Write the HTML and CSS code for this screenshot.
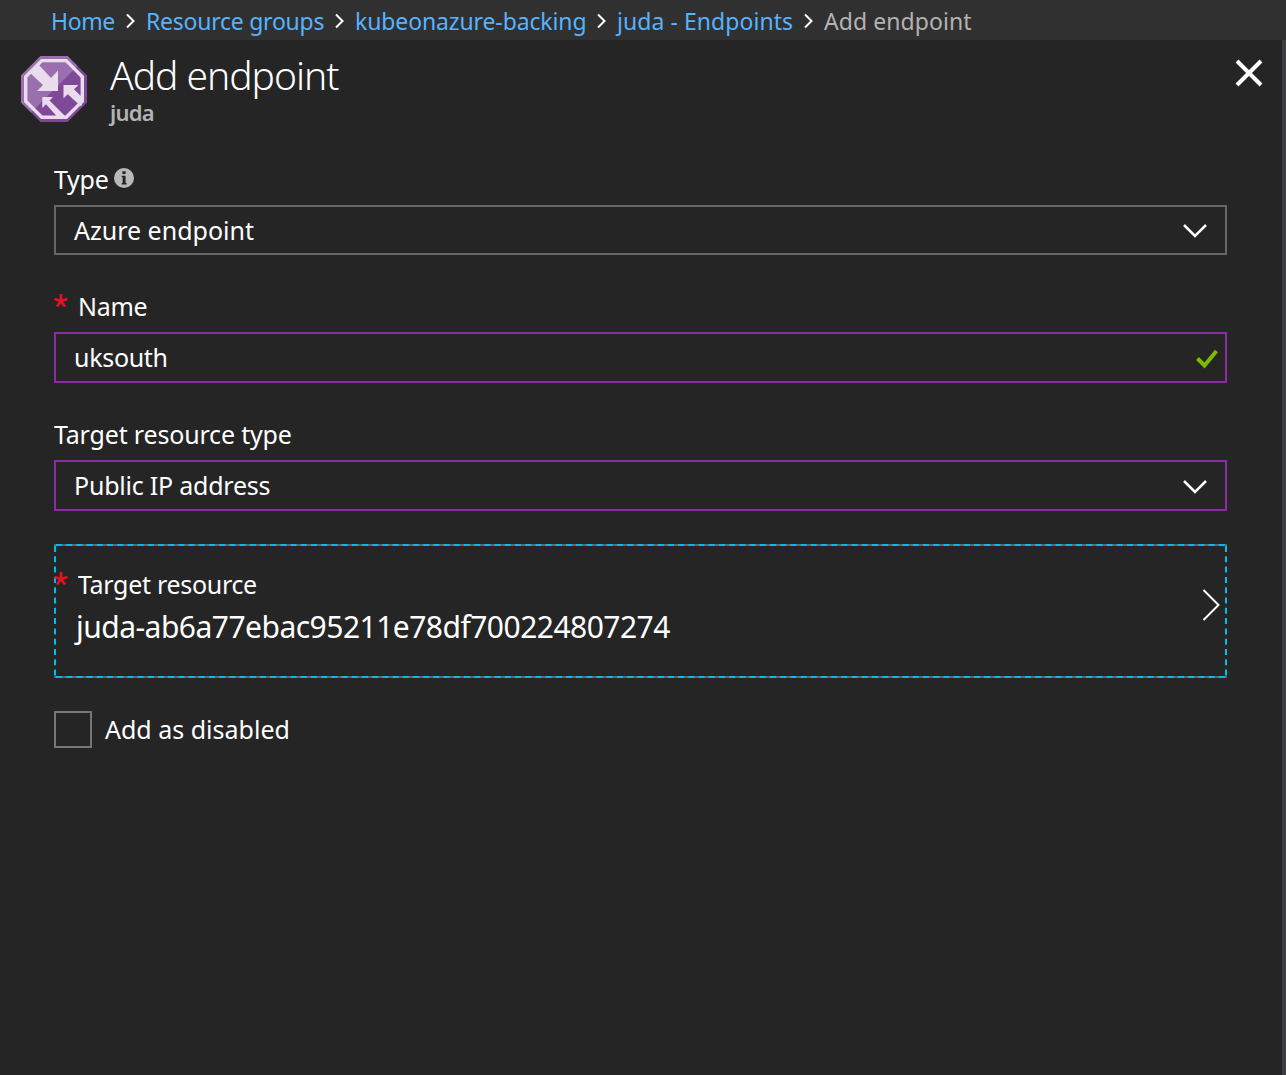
FILE: index.html
```html
<!DOCTYPE html>
<html lang="en">
<head>
<meta charset="utf-8">
<title>Add endpoint</title>
<link rel="stylesheet" href="styles.css">
</head>
<body>
<nav class="breadcrumb">
  <a class="crumb home">Home</a>
  <svg class="sep" viewBox="0 0 9 16"><path d="M1 1.500l6.500 6.500-6.500 6.500"/></svg>
  <a class="crumb groups">Resource groups</a>
  <svg class="sep" viewBox="0 0 9 16"><path d="M1 1.500l6.500 6.500-6.500 6.500"/></svg>
  <a class="crumb backing">kubeonazure-backing</a>
  <svg class="sep" viewBox="0 0 9 16"><path d="M1 1.500l6.500 6.500-6.500 6.500"/></svg>
  <a class="crumb endpoints">juda - Endpoints</a>
  <svg class="sep" viewBox="0 0 9 16"><path d="M1 1.500l6.500 6.500-6.500 6.500"/></svg>
  <span class="crumb current">Add endpoint</span>
</nav>
<main class="blade">
  <header class="blade-header">
    <svg class="logo" viewBox="0 0 66 66">
      <path fill="#804998" d="M19.500 0h27L66 19.500v27L46.500 66h-27L0 46.500v-27z"/>
      <path fill="#9b6fae" d="M19.500 0h27L56.500 10 10 56.500 0 46.500v-27z"/>
      <path fill="none" stroke="#e9dded" stroke-width="3.400" d="M20.800 4.600h24.400L61.300 20.800v24.400L45.200 61.300H20.800L4.700 45.200V20.800z"/>
      <path fill="#e9dded" d="M8 16L17.500 8.500 30 22l7-7.500V35H16l6-6z"/>
      <path fill="#e9dded" d="M42.500 29h15l-4.500 4.300 8 8V49l-1.500 1L46.800 38.300l-4.300 4z"/>
      <path fill="#e9dded" d="M21.300 41H32l-3.500 3.500L45 61h-8.500L25 48.300l-3.700 3.700z"/>
    </svg>
    <div class="heading">
      <h1 class="title">Add endpoint</h1>
      <div class="subtitle">juda</div>
    </div>
    <svg class="close" viewBox="0 0 28 28"><path d="M2 2l24 24M26 2L2 26"/></svg>
  </header>
  <form class="form">
    <div class="label type-label"><span class="type-text">Type</span>
      <svg class="info" viewBox="0 0 20 20"><circle cx="10" cy="10" r="10" fill="#b8b8b8"/><path fill="#252525" d="M8.400 3.200h3.200v2.900H8.400zM7.700 7.700h3.900v7.300H12.500v1.500H7.700V15h.9V9.200h-.9z"/></svg>
    </div>
    <div class="field"><span class="azure">Azure endpoint</span><svg class="chevron" viewBox="0 0 24 14"><path d="M1 1l11 11L23 1"/></svg></div>
    <div class="label name-label"><svg class="star" viewBox="0 0 14 14"><path d="M7 7V0M7 7l6.500-2M7 7l4 5.500M7 7l-4 5.500M7 7L.5 5"/></svg><span class="name">Name</span></div>
    <div class="field edited name-field"><span class="uksouth">uksouth</span><svg class="check" viewBox="0 0 22 20"><path d="M1.500 9.500l7 7L20.500 2"/></svg></div>
    <div class="label target-type-label"><span class="target-type">Target resource type</span></div>
    <div class="field edited"><span class="public">Public IP address</span><svg class="chevron" viewBox="0 0 24 14"><path d="M1 1l11 11L23 1"/></svg></div>
    <div class="picker">
      <svg class="focus" viewBox="0 0 1173 134"><path class="under" d="M0 1h1173M0 133h1173"/><path class="dash" d="M0 1h1173M0 133h1173"/><path class="dash side" d="M1 0v134M1172 0v134"/></svg>
      <div class="picker-content">
        <div class="label"><svg class="star" viewBox="0 0 14 14"><path d="M7 7V0M7 7l6.500-2M7 7l4 5.500M7 7l-4 5.500M7 7L.5 5"/></svg><span class="target">Target resource</span></div>
        <div class="resource">juda-ab6a77ebac95211e78df700224807274</div>
      </div>
      <svg class="open" viewBox="0 0 18 32"><path d="M1.500 1l15 15-15 15"/></svg>
    </div>
    <div class="option"><span class="checkbox"></span><span class="disabled-text">Add as disabled</span></div>
  </form>
</main>
</body>
</html>
```

FILE: styles.css
```css
* { box-sizing: border-box; }
body {
  margin: 0;
  width: 1286px;
  height: 1075px;
  overflow: hidden;
  background: #252525;
  color: #fff;
  font: 25px/34px "Noto Sans", "Open Sans", sans-serif;
}
svg { display: block; flex: none; fill: none; }
span, a, .title, .resource { white-space: nowrap; }
.breadcrumb {
  display: flex;
  align-items: center;
  height: 40px;
  padding: 2px 0 0 51px;
  background: #303030;
  font-size: 23px;
}
.crumb { color: #55b3ff; flex: none; }
.home { width: 64px; letter-spacing: -.4px; }
.groups { width: 178px; letter-spacing: -.25px; }
.backing { width: 231px; letter-spacing: -.12px; }
.endpoints { width: 176px; letter-spacing: .06px; }
.current { color: #b3b3b3; letter-spacing: .07px; }
.sep { width: 9px; height: 16px; margin: 0 11px; stroke: #fff; stroke-width: 2; }
.blade { height: 1035px; border-right: 4px solid #3e3e40; }
.blade-header { display: flex; height: 116px; padding: 16px 19px 0 21px; }
.logo { width: 66px; height: 66px; }
.heading { margin-left: 23px; flex: 1; }
.title { margin: -6px 0 0; font-size: 39px; line-height: 50px; font-weight: 300; letter-spacing: -1.02px; }
.subtitle { margin-top: -3px; font-size: 22px; line-height: 30px; font-weight: 600; color: #b3b3b3; letter-spacing: -.8px; }
.close { width: 28px; height: 28px; margin-top: 3px; stroke: #fff; stroke-width: 4; }
.form { width: 1173px; margin-left: 54px; }
.label { display: flex; height: 34px; }
.label span, .name-field span, .public, .disabled-text { position: relative; top: -1px; }
.type-text { letter-spacing: -.3px; }
.name { letter-spacing: -.3px; }
.uksouth { letter-spacing: -.3px; }
.target-type { letter-spacing: -.17px; }
.public { letter-spacing: -.22px; }
.target { letter-spacing: -.3px; }
.type-label { margin-top: 7px; }
.info { width: 20px; height: 20px; margin: 5px 0 0 6px; }
.field {
  display: flex;
  align-items: center;
  height: 50px;
  margin-top: 8px;
  padding: 0 18px;
  border: 2px solid #666;
}
.edited { height: 51px; border-color: #8a2da5; }
.chevron { width: 24px; height: 14px; margin: 2px 0 0 auto; stroke: #fff; stroke-width: 2.5; }
.name-label { margin-top: 35px; }
.name-field { padding-right: 7px; margin-top: 8px; }
.check { width: 22px; height: 20px; margin: 3px 0 0 auto; stroke: #7fba00; stroke-width: 4; }
.target-type-label { margin-top: 35px; }
.star { width: 14px; height: 14px; margin: 4px 10px 0 0; stroke: #e81123; stroke-width: 2.7; }
.picker { position: relative; display: flex; width: 1173px; height: 134px; margin-top: 33px; padding: 24px 7px 0 0; }
.focus { position: absolute; inset: 0; width: 1173px; height: 134px; }
.under { stroke: #666; stroke-width: 2; }
.dash { stroke: #00bcf2; stroke-width: 2; stroke-dasharray: 6 4.200; stroke-dashoffset: -2; }
.side { stroke-dasharray: 6 4.300; stroke-dashoffset: -2; }
.picker-content { position: relative; flex: 1; }
.resource { margin: 5px 0 0 22px; font-size: 30px; line-height: 40px; letter-spacing: -.52px; }
.open { width: 18px; height: 32px; margin-top: 21px; stroke: #fff; stroke-width: 2; }
.option { display: flex; align-items: center; height: 37px; margin-top: 33px; }
.checkbox { width: 38px; height: 37px; margin-right: 13px; border: 2px solid #777; }
```
